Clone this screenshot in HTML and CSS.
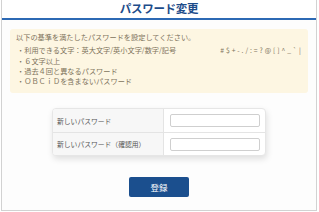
FILE: index.html
```html
<!DOCTYPE html>
<html lang="ja">
<head>
<meta charset="utf-8">
<title>パスワード変更</title>
<link rel="stylesheet" href="styles.css">
</head>
<body>
<div class="frame">
  <header class="header"><h1 class="title">パスワード変更</h1></header>
  <div class="notice">
    <p class="lead">以下の基準を満たしたパスワードを設定してください。</p>
    <ul class="rules">
      <li>・利用できる文字：英大文字/英小文字/数字/記号<span class="symbols"># $ + - . / : = ? @ [ ] ^ _ ` |</span></li>
      <li>・６文字以上</li>
      <li>・過去４回と異なるパスワード</li>
      <li>・ＯＢＣｉＤを含まないパスワード</li>
    </ul>
  </div>
  <div class="form">
    <div class="row">
      <label class="label">新しいパスワード</label>
      <div class="field"><input class="input" type="password"></div>
    </div>
    <div class="row">
      <label class="label">新しいパスワード（確認用）</label>
      <div class="field"><input class="input" type="password"></div>
    </div>
  </div>
  <div class="actions"><button class="btn">登録</button></div>
</div>
</body>
</html>
```
FILE: styles.css
```css
* { box-sizing: border-box; }
html, body { margin: 0; padding: 0; background: #ffffff; }
body {
  font-family: "Noto Sans CJK JP", "Noto Sans", sans-serif;
  width: 319px;
  height: 212px;
  overflow: hidden;
}
.frame {
  margin-left: 1px;
  width: 316px;
  height: 211px;
  border: 1px solid #d2d2d2;
  border-top: none;
  background: #fdfdfd;
}
.header {
  height: 20px;
  border-bottom: 2px solid #2c69b4;
  background: #ffffff;
}
.title {
  margin: 0;
  font-size: 11.5px;
  line-height: 17px;
  font-weight: bold;
  color: #1d4c8a;
  text-align: center;
  letter-spacing: -0.3px;
}
.notice {
  margin: 9px 8px 0 8px;
  height: 64px;
  background: #fdf6e2;
  border-radius: 3px;
  padding: 3px 6px 0 6px;
  color: #7d735c;
  font-size: 7.2px;
  line-height: 10.3px;
}
.lead { margin: 0 0 3px 0; }
.rules { list-style: none; margin: 0; padding: 0 0 0 1px; }
.rules li { white-space: nowrap; }
.symbols { margin-left: 44px; font-size: 6.8px; letter-spacing: 0.2px; }
.form {
  margin: 15px auto 0 auto;
  width: 214px;
  border: 1px solid #e6e6e6;
  border-radius: 4px;
  background: #ffffff;
  box-shadow: 1px 3px 6px rgba(0,0,0,0.12);
  overflow: hidden;
}
.row {
  display: grid;
  grid-template-columns: 111px 1fr;
  height: 23px;
}
.row + .row { border-top: 1px solid #e4e4e4; height: 23px; }
.label {
  background: #f7f7f7;
  border-right: 1px solid #e4e4e4;
  font-size: 6.8px;
  line-height: 10px;
  color: #555555;
  display: flex;
  align-items: center;
  padding-left: 4px;
  white-space: nowrap;
}
.field {
  display: flex;
  align-items: center;
  padding-left: 6px;
}
.input {
  width: 90px;
  height: 13px;
  border: 1px solid #cfcfcf;
  border-radius: 2px;
  background: #fff;
  padding: 0;
  margin: 0;
}
.actions {
  display: flex;
  justify-content: center;
  margin-top: 21px;
}
.btn {
  width: 60px;
  height: 20px;
  border: none;
  border-radius: 2px;
  background: #1b4f8e;
  color: #ffffff;
  font-family: "Noto Sans CJK JP", sans-serif;
  font-size: 8.5px;
  padding: 0;
}
```
